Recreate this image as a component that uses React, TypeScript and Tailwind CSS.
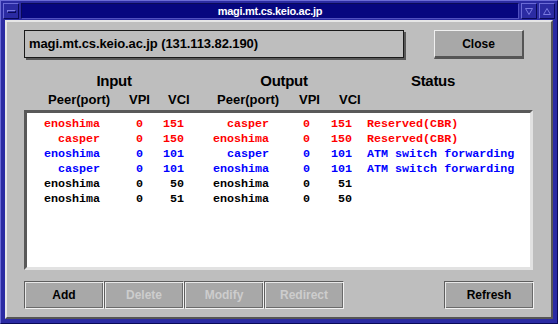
import React from "react";

type Row = {
  color: string;
  inPeer: string;
  inVpi: string;
  inVci: string;
  outPeer: string;
  outVpi: string;
  outVci: string;
  status: string;
};

const rows: Row[] = [
  { color: "text-[#ff0000]", inPeer: "enoshima", inVpi: "0", inVci: "151", outPeer: "casper", outVpi: "0", outVci: "151", status: "Reserved(CBR)" },
  { color: "text-[#ff0000]", inPeer: "casper", inVpi: "0", inVci: "150", outPeer: "enoshima", outVpi: "0", outVci: "150", status: "Reserved(CBR)" },
  { color: "text-[#0000ff]", inPeer: "enoshima", inVpi: "0", inVci: "101", outPeer: "casper", outVpi: "0", outVci: "101", status: "ATM switch forwarding" },
  { color: "text-[#0000ff]", inPeer: "casper", inVpi: "0", inVci: "101", outPeer: "enoshima", outVpi: "0", outVci: "101", status: "ATM switch forwarding" },
  { color: "text-black", inPeer: "enoshima", inVpi: "0", inVci: "50", outPeer: "enoshima", outVpi: "0", outVci: "51", status: "" },
  { color: "text-black", inPeer: "enoshima", inVpi: "0", inVci: "51", outPeer: "enoshima", outVpi: "0", outVci: "50", status: "" },
];

const FrameButton = ({ children }: { children?: React.ReactNode }) => (
  <div className="w-[16px] h-[16px] flex items-center justify-center bg-[#2b2ba3] border border-t-[#6b6bd6] border-l-[#6b6bd6] border-b-[#0a0a58] border-r-[#0a0a58]">
    {children}
  </div>
);

const BarButton = ({ label, disabled }: { label: string; disabled?: boolean }) => (
  <button
    className={
      "w-[80px] h-[28px] bg-[#a8a8a8] text-[12px] font-bold border border-t-[#5e5e5e] border-l-[#5e5e5e] border-b-[#f2f2f2] border-r-[#f2f2f2] shadow-[inset_1px_1px_0_#e8e8e8,inset_-1px_-1px_0_#6a6a6a] " +
      (disabled ? "text-[#cdcdcd]" : "text-black")
    }
  >
    {label}
  </button>
);

export default function App() {
  return (
    <div className="w-[558px] h-[324px] flex flex-col p-[2px] bg-[#2b2ba3] border border-t-[#6b6bd6] border-l-[#6b6bd6] border-b-[#0a0a58] border-r-[#0a0a58] font-['Liberation_Sans',Arial,sans-serif] overflow-hidden">
      {/* title bar */}
      <div className="flex h-[16px] gap-[2px]">
        <FrameButton>
          <div className="w-[9px] h-[3px] bg-[#2b2ba3] border border-t-[#7a7ae0] border-l-[#7a7ae0] border-b-[#0a0a58] border-r-[#0a0a58]" />
        </FrameButton>
        <div className="flex-1 flex items-center justify-center bg-[#06067f] border border-t-[#0a0a58] border-l-[#0a0a58] border-b-[#5050c0] border-r-[#5050c0] text-white text-[11px] font-bold tracking-[-0.3px] leading-none">
          magi.mt.cs.keio.ac.jp
        </div>
        <FrameButton>
          <svg width="8" height="7" viewBox="0 0 8 7">
            <path d="M0.5 0.5 H7.5 L4 6.5 Z" fill="none" stroke="#7a7ae0" strokeWidth="1" />
          </svg>
        </FrameButton>
        <FrameButton>
          <svg width="8" height="7" viewBox="0 0 8 7">
            <path d="M0.5 6.5 H7.5 L4 0.5 Z" fill="none" stroke="#7a7ae0" strokeWidth="1" />
          </svg>
        </FrameButton>
      </div>

      {/* client area */}
      <div className="flex-1 mt-[1px] mx-[2px] mb-[2px] flex flex-col bg-[#bebebe] border-2 border-t-[#e6e6e6] border-l-[#e6e6e6] border-b-[#555555] border-r-[#555555] pl-[17px] pr-[18px] pt-[8px]">
        <div className="flex gap-[30px]">
          <div className="w-[380px] h-[28px] flex items-center pl-[4px] bg-[#bebebe] border border-[#1a1a1a] shadow-[2px_2px_0_#585858] text-[13px] font-bold tracking-[-0.1px] text-black whitespace-nowrap">
            magi.mt.cs.keio.ac.jp (131.113.82.190)
          </div>
          <button className="w-[90px] h-[29px] bg-[#a8a8a8] border-t border-l border-t-[#f0f0f0] border-l-[#f0f0f0] border-b-[3px] border-r-[2px] border-b-[#555555] border-r-[#555555] text-[12px] font-bold text-black">
            Close
          </button>
        </div>

        {/* headings */}
        <div className="flex mt-[13px] h-[18px] leading-[18px] text-[15px] font-bold tracking-[-0.3px] text-black">
          <div className="w-[180px] text-center">Input</div>
          <div className="w-[160px] text-center">Output</div>
          <div className="w-[138px] text-center">Status</div>
        </div>
        <div className="flex mt-[2px] h-[16px] leading-[16px] pl-[24px] text-[13px] font-bold text-black whitespace-nowrap">
          <div className="w-[81px]">Peer(port)</div>
          <div className="w-[39px]">VPI</div>
          <div className="w-[49px]">VCI</div>
          <div className="w-[82px]">Peer(port)</div>
          <div className="w-[40px]">VPI</div>
          <div>VCI</div>
        </div>

        {/* connection list */}
        <div className="mt-[2px] h-[160px] bg-white border-[3px] border-t-[#595959] border-l-[#595959] border-b-[#e2e2e2] border-r-[#e2e2e2] pt-[4px] font-['Liberation_Mono','Courier_New',monospace] font-bold text-[11.7px]">
          {rows.map((r, i) => (
            <div key={i} className={"flex h-[15px] leading-[15px] whitespace-nowrap " + r.color}>
              <div className="w-[73px] text-right">{r.inPeer}</div>
              <div className="w-[43px] text-right">{r.inVpi}</div>
              <div className="w-[41px] text-right">{r.inVci}</div>
              <div className="w-[85px] text-right">{r.outPeer}</div>
              <div className="w-[41px] text-right">{r.outVpi}</div>
              <div className="w-[42px] text-right">{r.outVci}</div>
              <div className="pl-[15px]">{r.status}</div>
            </div>
          ))}
        </div>

        {/* buttons */}
        <div className="flex mt-[11px]">
          <BarButton label="Add" />
          <BarButton label="Delete" disabled />
          <BarButton label="Modify" disabled />
          <BarButton label="Redirect" disabled />
          <div className="flex-1" />
          <button className="w-[90px] h-[28px] mr-[-1px] bg-[#a8a8a8] text-[12px] font-bold text-black border border-t-[#5e5e5e] border-l-[#5e5e5e] border-b-[#f2f2f2] border-r-[#f2f2f2] shadow-[inset_1px_1px_0_#e8e8e8,inset_-1px_-1px_0_#6a6a6a]">
            Refresh
          </button>
        </div>
      </div>
    </div>
  );
}
